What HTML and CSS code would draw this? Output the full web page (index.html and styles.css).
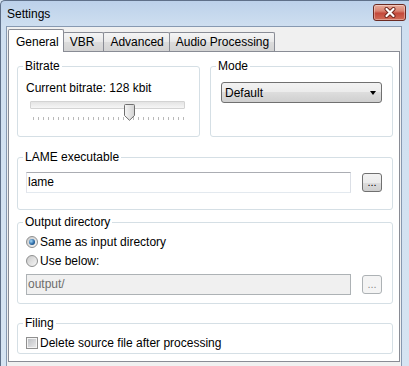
FILE: index.html
```html
<!DOCTYPE html>
<html lang="en">
<head>
    <meta charset="UTF-8">
    <meta name="viewport" content="width=device-width, initial-scale=1.0">
    <title>Settings</title>
    <link rel="stylesheet" href="styles.css">
</head>
<body>
<div class="window">
    <div class="titlebar">
        <span class="title">Settings</span>
        <div class="close">
            <svg width="14" height="11" viewBox="0 0 14 11">
                <path d="M3.5 2l7 7M10.5 2l-7 7" stroke="#6e251c" stroke-width="4" stroke-linecap="round"/>
                <path d="M3.5 2l7 7M10.5 2l-7 7" stroke="#fff" stroke-width="2.2" stroke-linecap="round"/>
            </svg>
        </div>
    </div>
    <div class="client">
        <div class="tabs">
            <div class="tab active">General</div>
            <div class="tab vbr">VBR</div>
            <div class="tab">Advanced</div>
            <div class="tab">Audio Processing</div>
        </div>
        <div class="panel">
            <div class="row">
                <fieldset class="group bitrate">
                    <legend>Bitrate</legend>
                    <div class="current">Current bitrate: 128 kbit</div>
                    <div class="slider">
                        <div class="track"></div>
                        <svg class="thumb" width="11" height="17" viewBox="0 0 11 17">
                            <defs>
                                <linearGradient id="thumbfill" x1="0" x2="1" y1="0" y2="0">
                                    <stop offset="0" stop-color="#f6f6f6"/>
                                    <stop offset="1" stop-color="#d2d2d2"/>
                                </linearGradient>
                            </defs>
                            <path d="M1.5 .5H9.5Q10.5 .5 10.5 1.5V11.5L5.5 16.3L.5 11.5V1.5Q.5 .5 1.5 .5Z" fill="url(#thumbfill)" stroke="#6f6f6f"/>
                        </svg>
                        <div class="ticks"></div>
                    </div>
                </fieldset>
                <fieldset class="group mode">
                    <legend>Mode</legend>
                    <div class="select"><span>Default</span><span class="arrow"></span></div>
                </fieldset>
            </div>

            <fieldset class="group lame">
                <legend>LAME executable</legend>
                <div class="path-row">
                    <div class="input">lame</div>
                    <div class="browse">...</div>
                </div>
            </fieldset>

            <fieldset class="group output">
                <legend>Output directory</legend>
                <div class="option"><span class="radio checked"></span>Same as input directory</div>
                <div class="option"><span class="radio"></span>Use below:</div>
                <div class="path-row">
                    <div class="input disabled">output/</div>
                    <div class="browse disabled">...</div>
                </div>
            </fieldset>

            <fieldset class="group filing">
                <legend>Filing</legend>
                <div class="option check-row"><span class="checkbox"></span>Delete source file after processing</div>
            </fieldset>
        </div>
    </div>
</div>
</body>
</html>
```

FILE: styles.css
```css
* {box-sizing: border-box;}
body {margin: 0; width: 409px; height: 366px; overflow: hidden; font-family: "Liberation Sans", Arial, sans-serif; font-size: 12px; color: #000; background: #d6e4f2;}

/* window frame */
.window {width: 409px; height: 366px; border-top: 1px solid #5f7089; border-left: 1px solid #5f7089; border-top-left-radius: 5px; background: linear-gradient(#bcd1ea, #cfdff0 26px, #d6e4f2);}
.titlebar {height: 25px; display: flex; align-items: flex-start; justify-content: space-between; padding: 0 3px 0 6px;}
.title {margin-top: 6px; line-height: 14px;}
.close {margin-top: 3px; width: 33px; height: 17px; border: 1px solid #6b2a22; border-radius: 3px; background: linear-gradient(#e9ab9b, #d98473 40%, #c4493b 55%, #d06c58); display: flex; align-items: center; justify-content: center; box-shadow: inset 0 0 0 1px rgba(255,255,255,0.35);}

.client {margin: 0 7px 0 5px; height: 340px; border: 1px solid #8799b1; border-bottom: none; background: #f0f0f0; padding: 2px 1px 0;}

/* tabs */
.tabs {display: flex; align-items: flex-end; height: 22px;}
.tab {border: 1px solid #898c95; border-bottom: none; border-radius: 2px 2px 0 0; margin-left: -1px; padding: 2px 5px 2px 6px; line-height: 14px; background: linear-gradient(#f5f5f5, #e8e8e8 50%, #dcdcdc 50%, #d3d3d3);}
.tab:first-child {margin-left: 0;}
.tab.vbr {padding-right: 9px;}
.tab.active {position: relative; z-index: 1; background: #fff; padding: 5px 4px 3px 7px; margin-bottom: -1px;}

.panel {width: 392px; height: 311px; border: 1px solid #898c95; background: #fff; padding: 7px 6px 0 8px;}

/* group boxes */
.group {margin: 0; min-width: 0; border: 1px solid #d5dfe5; border-radius: 3px; padding: 8px 8px 0;}
.group legend {padding: 0 2px; margin-left: -3px; line-height: 14px;}
.row {display: flex; gap: 10px;}
.row .group {width: 183px;}

.bitrate {padding-bottom: 9px;}
.current {line-height: 14px;}
.slider {position: relative; height: 26px; margin-top: 4px;}
.track {width: 155px; height: 8px; margin: 6px 0 0 4px; border: 1px solid #d3d3d3; border-radius: 1px; background: linear-gradient(#e4e4e4, #f6f6f6);}
.thumb {position: absolute; top: 3px; left: 98px;}
.ticks {width: 151px; height: 3px; margin: 8px 0 0 7px; background: repeating-linear-gradient(to right, #b9b9b9 0 1px, transparent 1px 5px);}

.mode {padding: 9px 10px 0;}
.mode legend {margin-left: -5px;}
.select {width: 161px; height: 21px; border: 1px solid #707070; border-radius: 3px; background: linear-gradient(#f2f2f2, #ebebeb 50%, #dddddd 50%, #cfcfcf); display: flex; align-items: center; justify-content: space-between; padding: 0 5px 0 3px;}
.arrow {width: 0; height: 0; border-left: 3px solid transparent; border-right: 3px solid transparent; border-top: 4px solid #000;}

.lame {margin-top: 13px; padding-bottom: 16px;}
.path-row {display: flex; align-items: center; gap: 11px;}
.input {width: 325px; height: 21px; border: 1px solid #abadb3; border-color: #abadb3 #dbdfe6 #e3e9ef #e2e3ea; background: #fff; line-height: 19px; padding: 0 1px;}
.input.disabled {background: #f0f0f0; border-color: #adb2b5; color: #6d6d6d;}
.browse {width: 20px; height: 19px; border: 1px solid #707070; border-radius: 3px; background: linear-gradient(#f2f2f2, #ebebeb 50%, #dddddd 50%, #cfcfcf); text-align: center; line-height: 17px; font-size: 11px;}
.browse.disabled {border-color: #adb2b5; background: #f4f4f4; color: #8d8d8d;}

.output {margin-top: 5px; padding: 3px 8px 8px;}
.option {display: flex; align-items: center; height: 19px;}
.output .path-row {margin-top: 4px;}
.radio {width: 12px; height: 12px; margin-right: 2px; border-radius: 50%; border: 1px solid #8e8f8f; background: linear-gradient(135deg, #c9c9c9, #f7f7f7); display: flex; align-items: center; justify-content: center;}
.radio.checked::after {content: ""; width: 6px; height: 6px; border-radius: 50%; background: radial-gradient(circle at 35% 35%, #a6d8f8, #2c6ca8 55%, #0d2e55);}

.filing {margin-top: 12px; padding: 5px 8px 2px;}
.check-row {height: 16px;}
.checkbox {width: 12px; height: 12px; margin-right: 2px; border: 1px solid #8f8f8f; background: linear-gradient(135deg, #b9bcc0, #ededee); box-shadow: inset 0 0 0 1px #f4f4f4;}
```
